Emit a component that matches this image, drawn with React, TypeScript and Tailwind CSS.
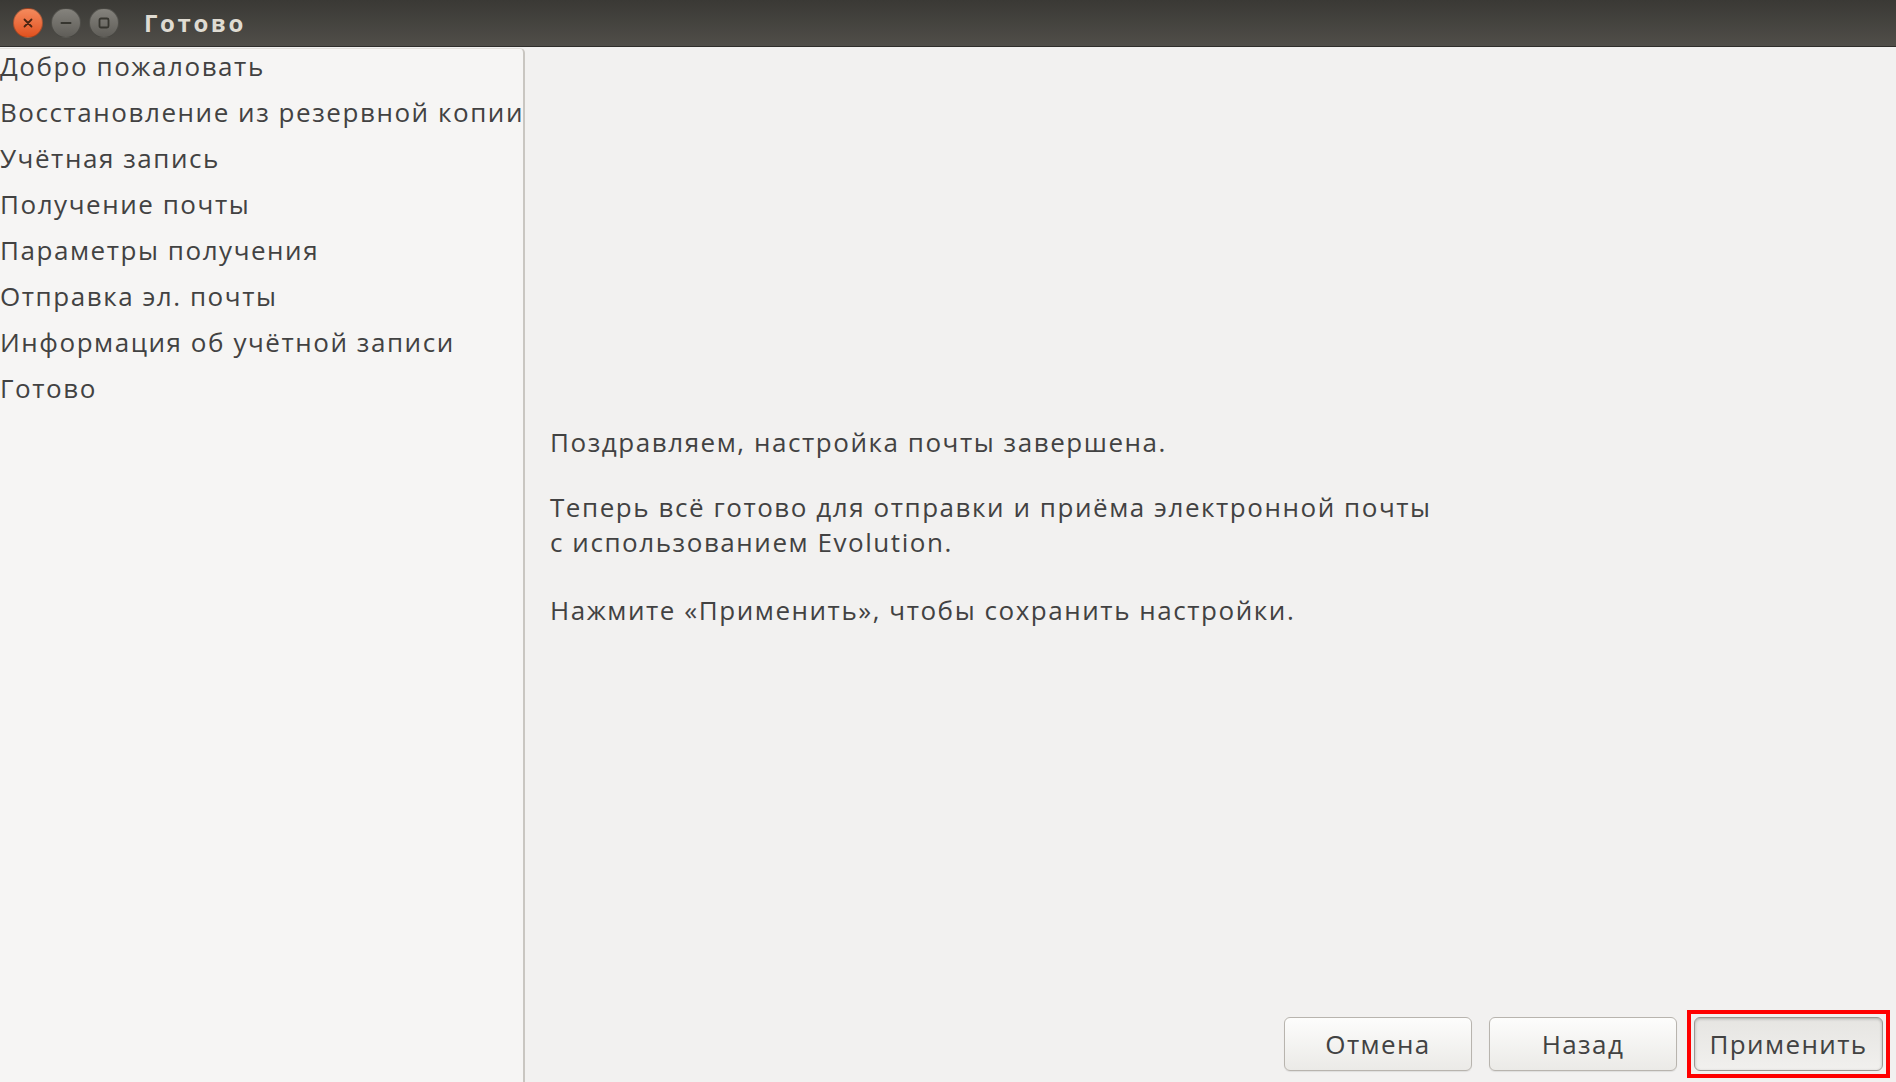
import React from 'react'

const STEPS = [
    'Добро пожаловать',
    'Восстановление из резервной копии',
    'Учётная запись',
    'Получение почты',
    'Параметры получения',
    'Отправка эл. почты',
    'Информация об учётной записи',
    'Готово',
]

const FONT = '[font-family:"Open_Sans","Noto_Sans",sans-serif]'

function WindowControls() {
    return (
        <div className="flex items-center gap-[8px] pl-[13px]">
            {/* close */}
            <div className="w-[30px] h-[30px] rounded-full bg-gradient-to-b from-[#f58a5c] to-[#e0501c] border border-[#3a2a20]/40 flex items-center justify-center">
                <svg width="12" height="12" viewBox="0 0 12 12">
                    <path d="M2.5 2.5 L9.5 9.5 M9.5 2.5 L2.5 9.5" stroke="#4a2412" strokeWidth="1.8" strokeLinecap="round" />
                </svg>
            </div>
            {/* minimize */}
            <div className="w-[30px] h-[30px] rounded-full bg-gradient-to-b from-[#85837d] to-[#5f5d58] border border-[#2e2d2a]/50 flex items-center justify-center">
                <svg width="14" height="14" viewBox="0 0 14 14">
                    <path d="M2.5 7 H11.5" stroke="#36352f" strokeWidth="2" strokeLinecap="round" />
                </svg>
            </div>
            {/* maximize */}
            <div className="w-[30px] h-[30px] rounded-full bg-gradient-to-b from-[#85837d] to-[#5f5d58] border border-[#2e2d2a]/50 flex items-center justify-center">
                <svg width="14" height="14" viewBox="0 0 14 14">
                    <rect x="2.5" y="2.5" width="9" height="9" rx="1.5" fill="none" stroke="#36352f" strokeWidth="1.8" />
                </svg>
            </div>
        </div>
    )
}

function Btn({ label, active }: { label: string; active?: boolean }) {
    return (
        <div
            className={`h-[54px] rounded-[6px] border flex items-center justify-center text-[26px] tracking-[1.4px] text-[#424242] ${active
                ? 'w-[189px] border-[#9b9893] bg-gradient-to-b from-[#e6e5e2] to-[#f1f0ee] shadow-[inset_0_1px_3px_rgba(0,0,0,0.25)]'
                : 'w-[188px] border-[#b8b4ae] bg-gradient-to-b from-[#fdfdfc] to-[#ebeae7] shadow-[0_1px_1px_rgba(0,0,0,0.08)]'
                }`}
        >
            {label}
        </div>
    )
}

export default function App() {
    return (
        <div className={`w-[1896px] h-[1082px] flex flex-col bg-[#f2f1f0] overflow-hidden ${FONT}`}>

            {/* Title bar */}
            <div className="h-[47px] shrink-0 flex items-center bg-gradient-to-b from-[#3a3935] to-[#504e49] border-b border-[#2f2e2b]">
                <WindowControls />
                <span className="ml-[25px] text-[24px] font-bold tracking-[2.6px] text-[#dfdbd2] leading-none">Готово</span>
            </div>

            <div className="flex-1 flex min-h-0 pt-[1px]">

                {/* Steps sidebar */}
                <div className="w-[525px] shrink-0 bg-[#f6f5f4] border-r-2 border-t border-[#c9c6c1] border-t-[#e2e0dc] rounded-tr-[5px] flex flex-col">
                    {STEPS.map(s => (
                        <div key={s} className="h-[34px] leading-[34px] mb-[12px] text-[26px] tracking-[1.55px] text-[#424242] whitespace-nowrap">
                            {s}
                        </div>
                    ))}
                </div>

                {/* Page */}
                <div className="flex-1 flex flex-col">
                    <div className="flex-1 flex flex-col justify-center pl-[25px] text-[26px] leading-[35px] tracking-[1.55px] text-[#424242]">
                        <p>Поздравляем, настройка почты завершена.</p>
                        <p className="mt-[30px]">
                            Теперь всё готово для отправки и приёма электронной почты
                            <br />
                            с использованием Evolution.
                        </p>
                        <p className="mt-[33px]">Нажмите «Применить», чтобы сохранить настройки.</p>
                    </div>

                    <div className="h-[78px] shrink-0 flex items-start justify-end pt-[13px] pr-[6px]">
                        <div className="mr-[17px]"><Btn label="Отмена" /></div>
                        <div className="mr-[10px]"><Btn label="Назад" /></div>
                        <div className="-mt-[7px] border-[4px] border-[#ff0000] p-[3px]">
                            <Btn label="Применить" active />
                        </div>
                    </div>
                </div>
            </div>
        </div>
    )
}
